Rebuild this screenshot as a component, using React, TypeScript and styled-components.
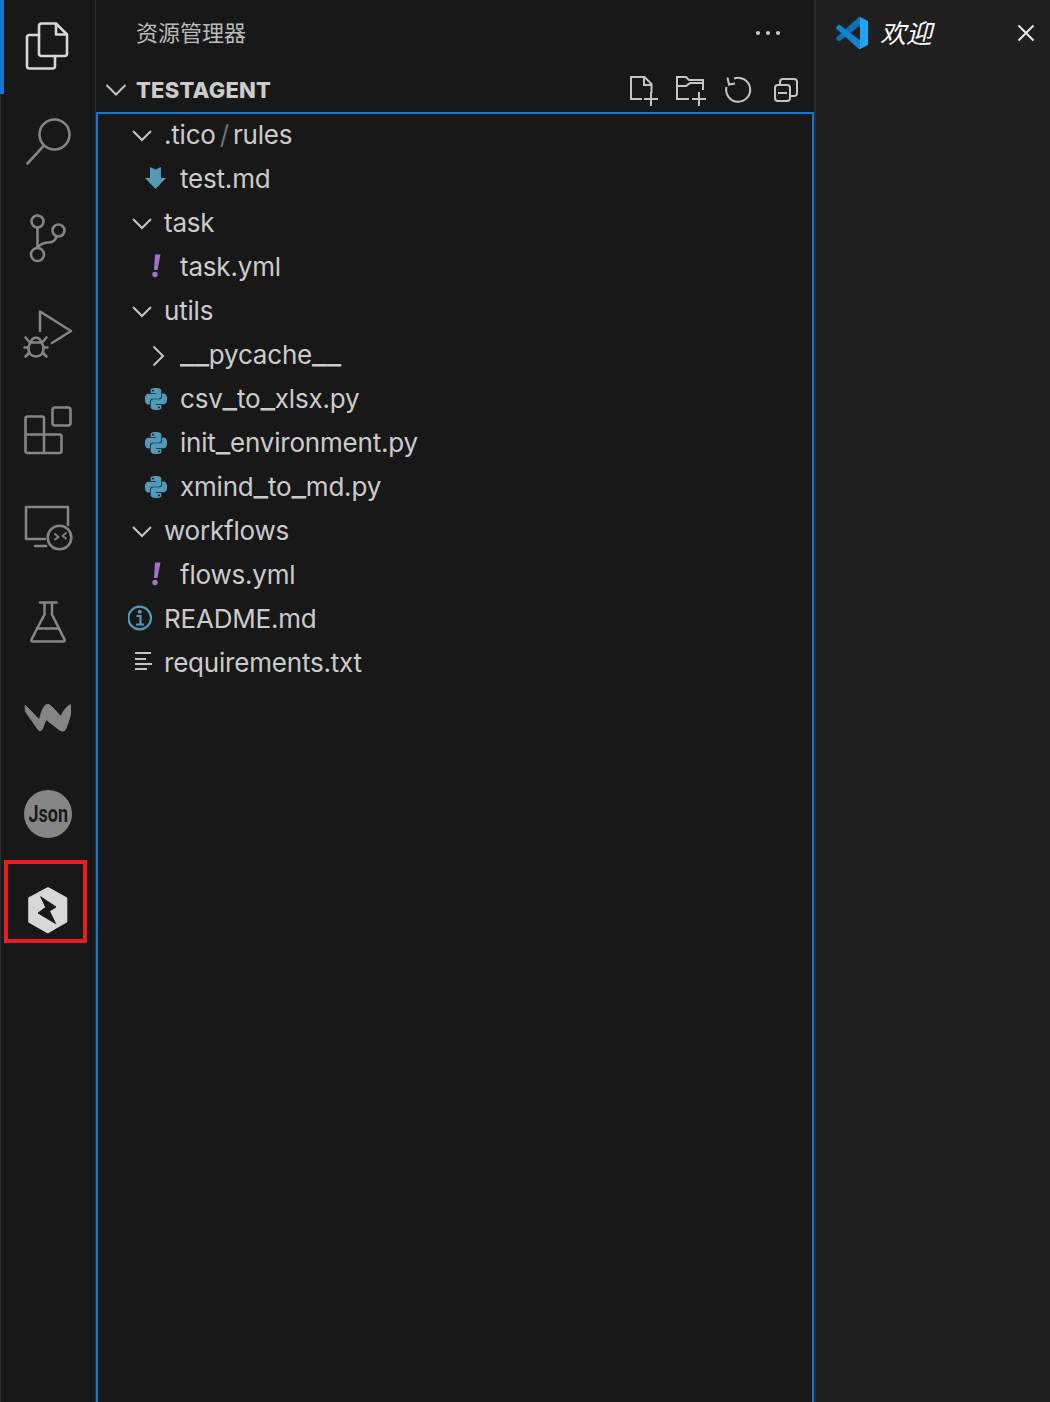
import React from 'react';
import styled, { createGlobalStyle } from 'styled-components';
import { SiPython } from 'react-icons/si';

const GlobalStyle = createGlobalStyle`
  html, body {
    margin: 0;
    height: 100%;
    overflow: hidden;
    background: #181818;
  }
  #root {
    height: 100%;
  }
`;

const UI_FONT = `Inter, "Noto Sans CJK SC", sans-serif`;

const Window = styled.div`
  display: flex;
  height: 1402px;
  width: 1050px;
  overflow: hidden;
  font-family: ${UI_FONT};
`;

/* activity bar */
const ActivityBar = styled.nav`
  width: 96px;
  flex: none;
  margin-top: -2px;
  height: 1404px;
  background: #181818;
  box-shadow: inset -1px 0 0 #2b2b2b, inset 1px 0 0 #2b2b2b;
`;

const ActivityCell = styled.div`
  position: relative;
  height: 96px;
  display: flex;
  align-items: center;
  justify-content: center;
`;

const ActiveMark = styled.span`
  position: absolute;
  left: 0;
  top: 0;
  width: 4px;
  height: 96px;
  background: #1177cf;
`;

const Highlight = styled.span`
  position: absolute;
  left: 4px;
  top: -2px;
  width: 83px;
  height: 83px;
  box-sizing: border-box;
  border: 4px solid #ea1c1c;
`;

const BarIcon = styled.svg<{ $active?: boolean }>`
  width: 48px;
  height: 48px;
  overflow: visible;
  fill: none;
  stroke: ${p => (p.$active ? '#d7d7d7' : '#858585')};
  stroke-width: 2.6;
  stroke-linecap: round;
  stroke-linejoin: round;
`;

const FilledBarIcon = styled(BarIcon)<{ $tone: string }>`
  fill: ${p => p.$tone};
  stroke: ${p => p.$tone};
  stroke-width: 1;
`;

const JsonBadge = styled.div`
  width: 48px;
  height: 48px;
  border-radius: 50%;
  background: #868686;
  display: flex;
  align-items: center;
  justify-content: center;
  overflow: hidden;
`;

const JsonText = styled.span`
  font-family: Roboto, sans-serif;
  font-weight: 700;
  font-size: 23px;
  color: #1a1a1a;
  transform: scaleX(0.78);
`;

const FilesIcon = () => (
  <BarIcon $active viewBox="24 22 48 48">
    <path d="M41 23.5h15l11 11v19a2.5 2.5 0 0 1-2.5 2.5H41.5a2.5 2.5 0 0 1-2.5-2.5V26a2.5 2.5 0 0 1 2-2.5z" />
    <path d="M56 24v10.5h10.5" />
    <path d="M39 35h-9.5a2.5 2.5 0 0 0-2.5 2.5V66a2.5 2.5 0 0 0 2.5 2.5h23a2.5 2.5 0 0 0 2.5-2.5v-10" />
  </BarIcon>
);

const SearchIcon = () => (
  <BarIcon viewBox="24 118 48 48">
    <circle cx="54.5" cy="134.5" r="15" />
    <path d="M43 146.5L27.5 163.5" />
  </BarIcon>
);

const BranchIcon = () => (
  <BarIcon viewBox="24 214 48 48">
    <circle cx="37.5" cy="221.5" r="6" />
    <circle cx="58.5" cy="230.5" r="6" />
    <circle cx="37.5" cy="254.5" r="6.5" />
    <path d="M37.5 228v20" />
    <path d="M38 247c3-3.5 7-4.5 11-4.5 4.5 0 7-3.5 7.5-6.5" />
  </BarIcon>
);

const DebugIcon = () => (
  <BarIcon viewBox="24 310 48 48">
    <path d="M40 331V311.5L71 331L52 343" />
    <path d="M31 341.5a5.2 5.2 0 0 1 10 0" />
    <path d="M30.5 342.5h11c1.5 2 2 4.5 2 6.5 0 4.5-3 7.5-7.5 7.5s-7.5-3-7.5-7.5c0-2 .5-4.5 2-6.5z" />
    <path d="M25.5 337.5l4 4.5M46.5 337.5l-4 4.5M24.5 347.5h4M47.5 347.5h-4M25.5 356.5l4-4M46.5 356.5l-4-4" />
  </BarIcon>
);

const ExtensionsIcon = () => (
  <BarIcon viewBox="24 406 48 48">
    <rect x="52.5" y="407.5" width="18" height="18" rx="2.5" />
    <path d="M44 434.5v-16a2 2 0 0 0-2-2H27.5a2 2 0 0 0-2 2v32.5a2 2 0 0 0 2 2h32a2 2 0 0 0 2-2v-14.5a2 2 0 0 0-2-2z" />
    <path d="M25.5 434.5H44v18.5" />
  </BarIcon>
);

const RemoteIcon = () => (
  <BarIcon viewBox="24 502 48 48">
    <path d="M68 525v-18H26v32h19" />
    <path d="M35 546h11" />
    <circle cx="59.5" cy="537.5" r="11.8" />
    <path d="M55 534l3.5 3-3.5 2.5M66 533l-3.5 3 3.5 2.5" strokeWidth="1.8" />
  </BarIcon>
);

const FlaskIcon = () => (
  <BarIcon viewBox="24 598 48 48">
    <path d="M40 602.5h16.5" />
    <path d="M44.5 603v11.5L31.5 639.5c-.5 1 0 2 1 2h31c1 0 1.5-1 1-2L52 614.5V603" />
    <path d="M37 628.5h22" />
  </BarIcon>
);

const WaveIcon = () => (
  <FilledBarIcon $tone="#858585" viewBox="24 694 48 48">
    <path d="M25.5 705.5L39.5 720C40.5 715 42 709 45 705.5C46.5 704 48.5 704 50.5 705.5L61 716.5C63 711 66 707 70.5 704.5V714.5C69 720 67.5 725 65.5 729.5C64 731.5 61 731.5 59 729.5L46 719.5L42.5 728.5C41.5 731 39.5 731.5 38 729.5L25.5 711.5Z" />
  </FilledBarIcon>
);

const LightningPath = styled.path`
  fill: #181818;
  stroke: #181818;
  stroke-width: 1;
`;

const HexIcon = () => (
  <FilledBarIcon $tone="#d7d7d7" viewBox="24 886 48 48">
    <path strokeWidth="2.6" d="M48 888.5L66 898.5V921.5L48 932L29.5 921.5V898.5Z" />
    <LightningPath d="M41 897L56 907L49.5 911L55.5 923.5L38 913L45.5 907.5Z" />
  </FilledBarIcon>
);

/* side bar */
const SideBar = styled.aside`
  width: 720px;
  flex: none;
  box-sizing: border-box;
  display: flex;
  flex-direction: column;
  background: #181818;
  border-right: 2px solid #2b2b2b;
`;

const TitleRow = styled.header`
  height: 66px;
  flex: none;
  display: flex;
  align-items: center;
  justify-content: space-between;
  padding-left: 40px;
  padding-right: 33px;
`;

const ViewTitle = styled.h1`
  margin: 0 0 4px;
  font-family: "Noto Sans CJK SC", sans-serif;
  font-size: 22px;
  font-weight: 400;
  color: #bbbbbb;
`;

const DotsIcon = styled.svg`
  width: 26px;
  height: 6px;
  fill: #cccccc;
`;

const SectionHeader = styled.div`
  height: 46px;
  flex: none;
  display: flex;
  align-items: center;
`;

const SectionChevron = styled.svg`
  width: 40px;
  height: 46px;
  flex: none;
  fill: none;
  stroke: #c5c5c5;
  stroke-width: 2;
`;

const SectionName = styled.span`
  padding-top: 2px;
  font-size: 22px;
  font-weight: 800;
  letter-spacing: 0.2px;
  color: #cccccc;
  flex: 1;
`;

const Toolbar = styled.div`
  display: flex;
  padding-right: 4px;
`;

const ToolIcon = styled.svg`
  width: 48px;
  height: 46px;
  fill: none;
  stroke: #c5c5c5;
  stroke-width: 2;
`;

const Tree = styled.ul`
  flex: 1;
  margin: 0;
  padding: 0;
  list-style: none;
  border: 2px solid #1177cf;
  border-bottom: none;
`;

const Row = styled.li<{ $depth: number }>`
  height: 44px;
  display: flex;
  align-items: center;
  padding-left: ${p => 30 + p.$depth * 16}px;
  font-size: 26px;
  letter-spacing: -0.2px;
  color: #cccccc;
  white-space: nowrap;
`;

const RowName = styled.span`
  margin-bottom: 4px;
`;

const Underscore = styled.span`
  font-size: 32px;
  line-height: 0;
`;

const Slot = styled.svg`
  width: 36px;
  height: 44px;
  flex: none;
  fill: none;
  stroke: #c5c5c5;
  stroke-width: 2;
`;

const PythonSlot = styled.span`
  box-sizing: border-box;
  width: 36px;
  height: 44px;
  padding: 0 0 3px 1px;
  flex: none;
  display: flex;
  align-items: center;
  color: #519aba;
`;

const Slash = styled.span`
  color: #6f6f6f;
  margin: 0 4px;
`;

const ChevronDown = () => (
  <Slot viewBox="0 0 36 44">
    <path d="M5 17l9 9 9-9" />
  </Slot>
);

const ChevronRight = () => (
  <Slot viewBox="0 0 36 44">
    <path d="M9.5 12.5l9.5 9.5-9.5 9.5" />
  </Slot>
);

const MarkdownIcon = () => (
  <Slot viewBox="0 0 36 44">
    <path d="M6 9l5.5 2.5L17 9v11h5L11.5 31 1 20h5z" fill="#519aba" stroke="none" />
  </Slot>
);

const YamlIcon = () => (
  <Slot viewBox="0 0 36 44">
    <path d="M11 8.5h5.5L13.5 24h-3.5z" fill="#a074c4" stroke="none" />
    <circle cx="11" cy="28.5" r="2.7" fill="#a074c4" stroke="none" />
  </Slot>
);

const PythonIcon = () => (
  <PythonSlot>
    <SiPython size={22} />
  </PythonSlot>
);

const InfoIcon = () => (
  <Slot viewBox="0 0 36 44">
    <circle cx="11.7" cy="20" r="11.3" stroke="#519aba" strokeWidth="2.2" />
    <circle cx="11.7" cy="13.8" r="2" fill="#519aba" stroke="none" />
    <path d="M8.5 18h4v8.5M8 26.5h8" stroke="#519aba" strokeWidth="2.2" />
  </Slot>
);

const TextIcon = () => (
  <Slot viewBox="0 0 36 44">
    <path d="M7 11h16M7 17h11M7 22h17M7 27h12" strokeWidth="1.8" />
  </Slot>
);

/* right pane */
const EditorPane = styled.main`
  flex: 1;
  background: #1f1f1f;
`;

const TabRow = styled.div`
  height: 66px;
  display: flex;
  align-items: center;
  padding: 0 15px 0 20px;
`;

const TabLogo = styled.svg`
  width: 32px;
  height: 32px;
  flex: none;
`;

const TabTitle = styled.span`
  flex: 1;
  margin: 0 0 4px 12px;
  font-family: "Noto Sans CJK SC", sans-serif;
  font-size: 26px;
  font-style: italic;
  color: #ffffff;
`;

const CloseIcon = styled.svg`
  width: 18px;
  height: 18px;
  fill: none;
  stroke: #e8e8e8;
  stroke-width: 2;
`;

const VsCodeLogo = () => (
  <TabLogo viewBox="0 0 100 100">
    <path
      fill="#0d6fb3"
      d="M96.46 10.8L75.86.88C73.47-.27 70.62.21 68.75 2.08L1.3 63.58c-1.81 1.66-1.81 4.51 0 6.16l5.51 5.01c1.49 1.35 3.72 1.45 5.32.24L93.36 13.37C96.09 11.3 100 13.25 100 16.67v-.24c0-2.4-1.38-4.59-3.54-5.63z"
    />
    <path
      fill="#1184d3"
      d="M96.46 89.2L75.86 99.12c-2.39 1.15-5.24.67-7.11-1.2L1.3 36.42c-1.81-1.66-1.81-4.51 0-6.16l5.51-5.01c1.49-1.35 3.72-1.45 5.32-.24l81.23 61.62c2.73 2.07 6.64.12 6.64-3.3v.24c0 2.4-1.38 4.59-3.54 5.63z"
    />
    <path
      fill="#1fa5f5"
      d="M75.86 99.13c-2.39 1.15-5.24.66-7.11-1.21C71.06 100.22 75 98.59 75 95.33V4.67c0-3.26-3.94-4.89-6.25-2.59 1.87-1.87 4.72-2.36 7.11-1.21l20.6 9.91c2.16 1.04 3.54 3.23 3.54 5.63v67.17c0 2.4-1.38 4.59-3.54 5.63z"
    />
  </TabLogo>
);

// the reference font draws a wider underscore than Inter does
const withWideUnderscores = (name: string) =>
  name.split(/(_)/).map((part, i) => (part === '_' ? <Underscore key={i}>_</Underscore> : part));

const files = [
  { depth: 0, icon: <ChevronDown />, name: <>.tico<Slash>/</Slash>rules</> },
  { depth: 1, icon: <MarkdownIcon />, name: 'test.md' },
  { depth: 0, icon: <ChevronDown />, name: 'task' },
  { depth: 1, icon: <YamlIcon />, name: 'task.yml' },
  { depth: 0, icon: <ChevronDown />, name: 'utils' },
  { depth: 1, icon: <ChevronRight />, name: withWideUnderscores('__pycache__') },
  { depth: 1, icon: <PythonIcon />, name: withWideUnderscores('csv_to_xlsx.py') },
  { depth: 1, icon: <PythonIcon />, name: withWideUnderscores('init_environment.py') },
  { depth: 1, icon: <PythonIcon />, name: withWideUnderscores('xmind_to_md.py') },
  { depth: 0, icon: <ChevronDown />, name: 'workflows' },
  { depth: 1, icon: <YamlIcon />, name: 'flows.yml' },
  { depth: 0, icon: <InfoIcon />, name: 'README.md' },
  { depth: 0, icon: <TextIcon />, name: 'requirements.txt' },
];

export default function App() {
  return (
    <Window>
      <GlobalStyle />
      <ActivityBar>
        <ActivityCell>
          <ActiveMark />
          <FilesIcon />
        </ActivityCell>
        <ActivityCell><SearchIcon /></ActivityCell>
        <ActivityCell><BranchIcon /></ActivityCell>
        <ActivityCell><DebugIcon /></ActivityCell>
        <ActivityCell><ExtensionsIcon /></ActivityCell>
        <ActivityCell><RemoteIcon /></ActivityCell>
        <ActivityCell><FlaskIcon /></ActivityCell>
        <ActivityCell><WaveIcon /></ActivityCell>
        <ActivityCell>
          <JsonBadge><JsonText>Json</JsonText></JsonBadge>
        </ActivityCell>
        <ActivityCell>
          <Highlight />
          <HexIcon />
        </ActivityCell>
      </ActivityBar>

      <SideBar>
        <TitleRow>
          <ViewTitle>资源管理器</ViewTitle>
          <DotsIcon viewBox="0 0 26 6">
            <circle cx="3" cy="3" r="2" />
            <circle cx="13" cy="3" r="2" />
            <circle cx="23" cy="3" r="2" />
          </DotsIcon>
        </TitleRow>
        <SectionHeader>
          <SectionChevron viewBox="0 0 40 46">
            <path d="M10.5 19l9.5 9.5 9.5-9.5" />
          </SectionChevron>
          <SectionName>TESTAGENT</SectionName>
          <Toolbar>
            <ToolIcon viewBox="618 66 48 46">
              <path d="M642 99h-11V77h13.5l7 7v9" />
              <path d="M644 77v8h8" />
              <path d="M651 92v14M644 99h14" />
            </ToolIcon>
            <ToolIcon viewBox="666 66 48 46">
              <path d="M689 99h-12V77h9l3 3h14v10" />
              <path d="M677 86h9l4-3h13" />
              <path d="M699 92v14M692 99h14" />
            </ToolIcon>
            <ToolIcon viewBox="714 66 48 46">
              <path d="M734 78.5A12 12 0 1 1 726.5 87" />
              <path d="M727.5 77.5L729 84.5L735 83.5" />
            </ToolIcon>
            <ToolIcon viewBox="762 66 48 46">
              <rect x="775" y="85" width="15" height="16" rx="3" />
              <path d="M780 85v-3a3 3 0 0 1 3-3h11a3 3 0 0 1 3 3v11a3 3 0 0 1-3 3h-4" />
              <path d="M778 93h9" />
            </ToolIcon>
          </Toolbar>
        </SectionHeader>
        <Tree>
          {files.map((file, i) => (
            <Row key={i} $depth={file.depth}>
              {file.icon}
              <RowName>{file.name}</RowName>
            </Row>
          ))}
        </Tree>
      </SideBar>

      <EditorPane>
        <TabRow>
          <VsCodeLogo />
          <TabTitle>欢迎</TabTitle>
          <CloseIcon viewBox="0 0 18 18">
            <path d="M1.5 1.5l15 15M16.5 1.5l-15 15" />
          </CloseIcon>
        </TabRow>
      </EditorPane>
    </Window>
  );
}
